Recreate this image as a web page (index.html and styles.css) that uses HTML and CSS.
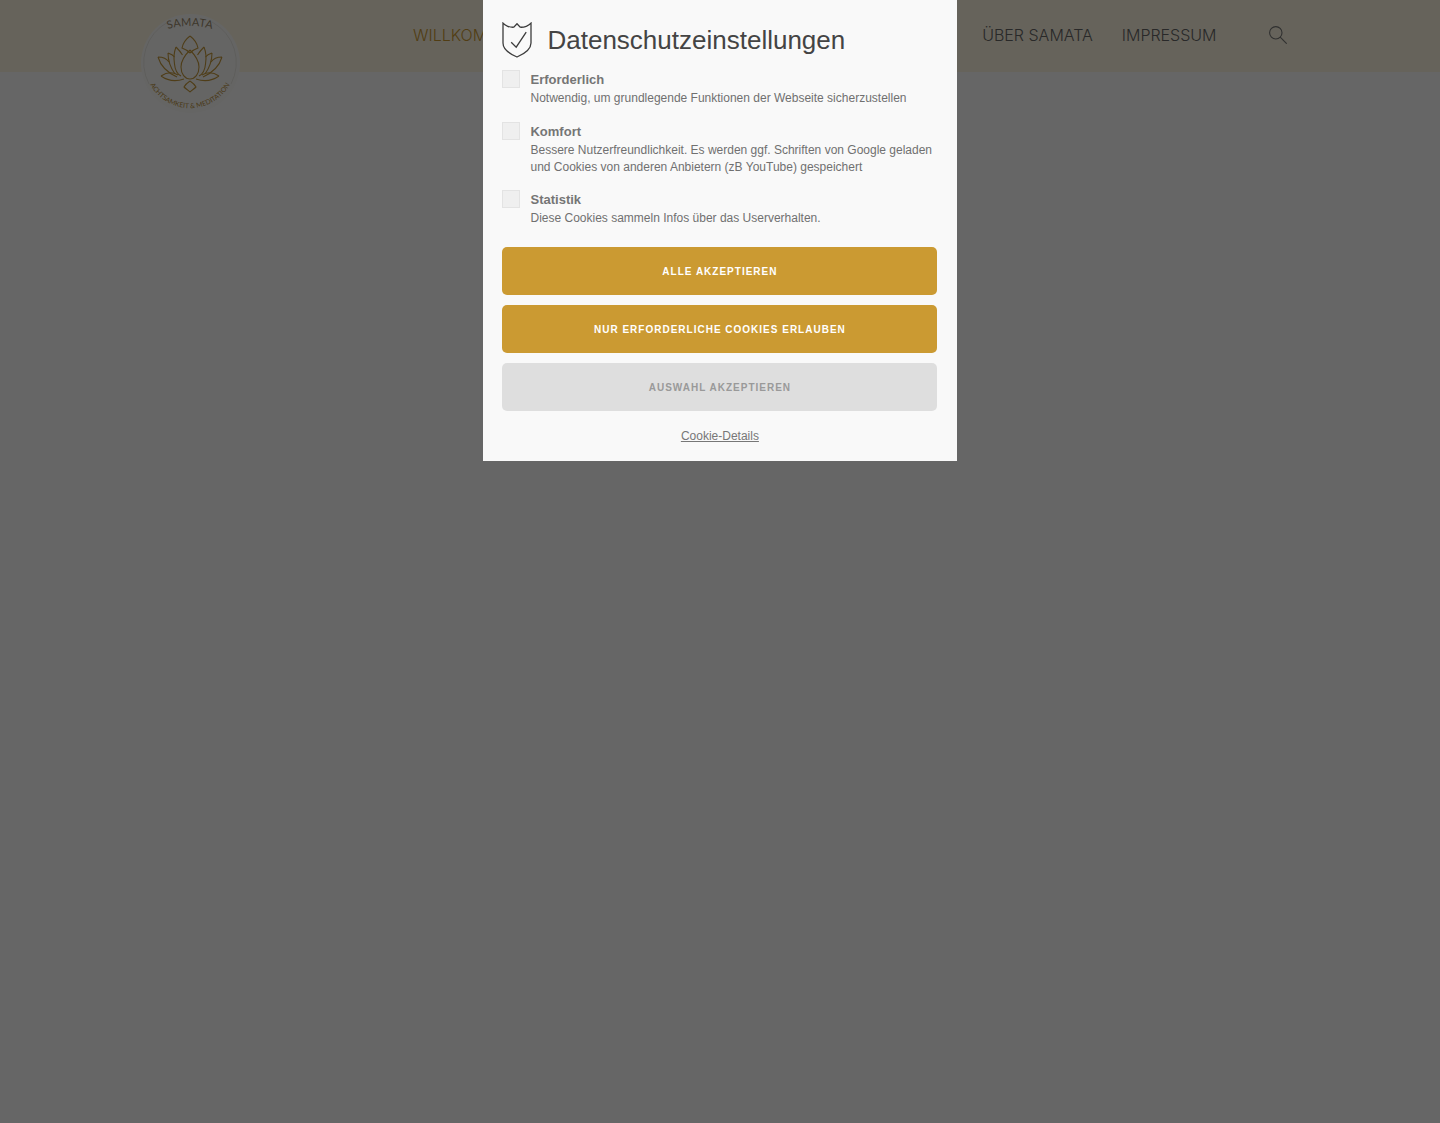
FILE: index.html
```html
<!DOCTYPE html>
<html lang="de">
<head>
<meta charset="utf-8">
<title>Samata</title>
<link rel="stylesheet" href="styles.css">
</head>
<body>
<header class="site-header">
  <a class="logo" href="#">
    <svg class="logo-svg" viewBox="0 0 100 100" width="100" height="100">
      <defs>
        <path id="arc-top" d="M24 16.200 A80 80 0 0 1 76 16.200"/>
        <path id="arc-bottom" d="M6.500 62 A45.500 45.500 0 0 0 93.500 62"/>
        <g id="lotus-half">
          <path d="M50 36 C44 42 41 47 41 53 C41 60 45 65 50 65"/>
          <path d="M50 22 C46 25 43 29 42 34 C45 35 48 37 50 39"/>
          <path d="M36 33 C38 35 40 37 42.500 41 M36 33 C34 38 33.500 44 34.500 50 C35 56 37 60 41 62"/>
          <path d="M28 39 C31 40 33 41 34.500 43 M28 39 C28 46 30 53 35 60"/>
          <path d="M18 43 C23 43 27 45 29 48 M18 43 C20 50 26 58 37 63"/>
          <path d="M21 62 C27 58 33 58 38 61 M21 62 C28 67 35 68 44 65"/>
          <path d="M50 67 C47 69 45 71 44 73 C46 75 48 76 50 78"/>
        </g>
      </defs>
      <circle class="logo-disc" cx="50.500" cy="49.500" r="49.500"/>
      <path class="logo-ring" d="M28 8 A46 46 0 0 0 9 70 M72 8 A46 46 0 0 1 91 70"/>
      <text class="logo-title"><textPath href="#arc-top" startOffset="50%" text-anchor="middle">SAMATA</textPath></text>
      <g class="lotus">
        <use href="#lotus-half"/>
        <use href="#lotus-half" class="lotus-mirror"/>
      </g>
      <text class="logo-sub"><textPath href="#arc-bottom" startOffset="50%" text-anchor="middle">ACHTSAMKEIT &amp; MEDITATION</textPath></text>
    </svg>
  </a>
  <nav class="main-nav">
    <a class="nav-link is-active" href="#">WILLKOMMEN</a>
    <a class="nav-link nav-about" href="#">ÜBER SAMATA</a>
    <a class="nav-link" href="#">IMPRESSUM</a>
  </nav>
  <button class="search-button" type="button" aria-label="Suche">
    <svg viewBox="0 0 18 18" width="18" height="18"><circle cx="6.800" cy="6.800" r="6.200"/><path d="M11.200 11.200 L17.700 17.700"/></svg>
  </button>
</header>

<div class="overlay"></div>

<section class="privacy-modal">
  <h2 class="modal-title">
    <svg class="shield" viewBox="0 0 30 36" width="30" height="36">
      <path d="M1 1.200 C3 3.800 8 5.500 11.800 5.200 L15 1.800 L18.200 5.200 C22 5.500 27 3.800 29 1.200 L29 21 C29 27 22 32 15 35 C8 32 1 27 1 21 Z"/>
      <path d="M9.200 20.200 L14.200 25.200 L24.200 10.200"/>
    </svg>
    <span>Datenschutzeinstellungen</span>
  </h2>
  <div class="options">
    <div class="option">
      <span class="checkbox"></span>
      <div class="option-text">
        <strong>Erforderlich</strong>
        <p>Notwendig, um grundlegende Funktionen der Webseite sicherzustellen</p>
      </div>
    </div>
    <div class="option">
      <span class="checkbox"></span>
      <div class="option-text">
        <strong>Komfort</strong>
        <p>Bessere Nutzerfreundlichkeit. Es werden ggf. Schriften von Google geladen und Cookies von anderen Anbietern (zB YouTube) gespeichert</p>
      </div>
    </div>
    <div class="option">
      <span class="checkbox"></span>
      <div class="option-text">
        <strong>Statistik</strong>
        <p>Diese Cookies sammeln Infos über das Userverhalten.</p>
      </div>
    </div>
  </div>
  <div class="actions">
    <button class="btn btn-primary" type="button">Alle akzeptieren</button>
    <button class="btn btn-primary" type="button">Nur erforderliche Cookies erlauben</button>
    <button class="btn btn-muted" type="button">Auswahl akzeptieren</button>
  </div>
  <a class="details-link" href="#">Cookie-Details</a>
</section>
</body>
</html>
```

FILE: styles.css
```css
* { box-sizing: border-box; }

html, body {
  margin: 0;
  height: 100%;
  background: #fff;
}

body {
  font-family: "Liberation Sans", Arial, sans-serif;
  overflow: hidden;
}

.site-header {
  display: flex;
  align-items: center;
  height: 71.600px;
  padding-left: 140px;
  background: #fff8e3;
}

.logo {
  flex: none;
  height: 100px;
  align-self: flex-start;
  margin-top: 14px;
}

.logo-svg { display: block; overflow: visible; }
.logo-disc { fill: #fdfdfb; }
.logo-ring { fill: none; stroke: #d9d6cc; stroke-width: .5; }
.logo-title { font: 11px "Lato", sans-serif; letter-spacing: .3px; fill: #9a8a6c; }
.logo-sub { font: 6.800px "Lato", sans-serif; fill: #b8903c; }
.lotus { fill: none; stroke: #c59a3e; stroke-width: 1.100; stroke-linejoin: round; }
.lotus-mirror { transform: translateX(100px) scaleX(-1); }

.main-nav {
  display: flex;
  align-items: center;
  margin: -1px 0 0 173px;
  gap: 29px;
}

.nav-link {
  font-family: "Inter", sans-serif;
  font-size: 16px;
  font-weight: 300;
  line-height: 20px;
  color: #666;
  text-decoration: none;
  white-space: nowrap;
}

.nav-link.is-active { color: #cb9a32; }
.nav-about { margin-left: 430px; }

.search-button {
  display: flex;
  margin: -2px 0 0 52px;
  padding: 0;
  border: 0;
  background: none;
}

.search-button svg { fill: none; stroke: #777; stroke-width: 1.100; }

.overlay {
  position: fixed;
  inset: 0;
  background: rgba(0, 0, 0, .6);
}

.privacy-modal {
  position: fixed;
  top: 0;
  left: 483px;
  width: 474px;
  height: 461px;
  padding: 22px 19.600px 0 19.400px;
  background: #f9f9f9;
  color: #707070;
}

.modal-title {
  display: flex;
  align-items: center;
  gap: 15.100px;
  height: 36px;
  margin: 0 0 12px;
  font-size: 26px;
  font-weight: 400;
  line-height: 36px;
  color: #444;
}

.shield { flex: none; margin-top: -1px; fill: none; stroke: #3c3c3c; stroke-width: 1.300; }

.options { display: flex; flex-direction: column; gap: 14.500px; }
.option { display: flex; gap: 10.100px; }

.checkbox {
  flex: none;
  width: 18px;
  height: 18px;
  border: 1px solid #e3e3e3;
  background: #efefef;
}

.option-text { flex: 1; padding-top: 1px; font-size: 12px; line-height: 17px; }
.option-text strong { display: block; font-size: 13px; line-height: 18px; color: #757575; }
.option-text p { margin: 1px 0 0; }

.actions { display: flex; flex-direction: column; gap: 10px; margin-top: 20px; }

.btn {
  display: block;
  width: 100%;
  height: 48px;
  border: 0;
  border-radius: 5px;
  font-family: inherit;
  font-size: 10px;
  font-weight: 700;
  letter-spacing: 1px;
  text-transform: uppercase;
  text-align: center;
}

.btn-primary { background: #cb9a32; color: #fff; }
.btn-muted { background: #dedede; color: #999; }

.details-link {
  display: block;
  width: max-content;
  margin: 18px auto 0;
  font-size: 12px;
  line-height: 14px;
  color: #777;
}
```
